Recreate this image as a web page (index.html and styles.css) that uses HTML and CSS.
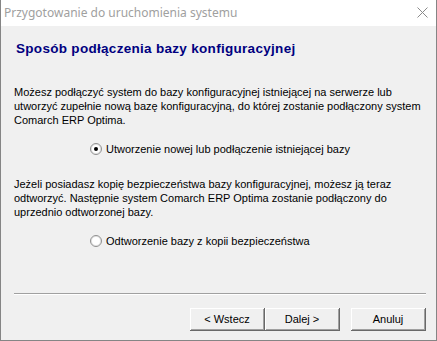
FILE: index.html
```html
<!DOCTYPE html>
<html lang="pl">
<head>
    <meta charset="UTF-8">
    <title>Przygotowanie do uruchomienia systemu</title>
    <link rel="stylesheet" href="styles.css">
</head>
<body>
    <div class="window">
        <div class="titlebar">
            <span class="title">Przygotowanie do uruchomienia systemu</span>
            <svg class="close" width="11" height="11" viewBox="0 0 11 11">
                <path d="M0.5 0.5 L10.5 10.5 M10.5 0.5 L0.5 10.5" stroke="#8a8a8a" stroke-width="1" fill="none"/>
            </svg>
        </div>
        <div class="content">
            <h1 class="heading">Sposób podłączenia bazy konfiguracyjnej</h1>
            <p class="text first">Możesz podłączyć system do bazy konfiguracyjnej istniejącej na serwerze lub utworzyć zupełnie nową bazę konfiguracyjną, do której zostanie podłączony system Comarch ERP Optima.</p>
            <label class="radio">
                <span class="dot checked"></span>
                <span>Utworzenie nowej lub podłączenie istniejącej bazy</span>
            </label>
            <p class="text second">Jeżeli posiadasz kopię bezpieczeństwa bazy konfiguracyjnej, możesz ją teraz odtworzyć. Następnie system Comarch ERP Optima zostanie podłączony do uprzednio odtworzonej bazy.</p>
            <label class="radio">
                <span class="dot"></span>
                <span>Odtworzenie bazy z kopii bezpieczeństwa</span>
            </label>
            <div class="spacer"></div>
            <hr class="sep">
            <div class="buttons">
                <button class="btn">&lt; Wstecz</button>
                <button class="btn">Dalej &gt;</button>
                <button class="btn cancel">Anuluj</button>
            </div>
        </div>
    </div>
</body>
</html>
```

FILE: styles.css
```css
html, body {
    margin: 0;
    padding: 0;
}
body {
    width: 437px;
    height: 341px;
    overflow: hidden;
    font-family: "Liberation Sans", Arial, sans-serif;
}
.window {
    box-sizing: border-box;
    width: 437px;
    height: 341px;
    display: flex;
    flex-direction: column;
    border: 1px solid #858585;
    border-top: none;
    background: #f0f0f0;
}
.titlebar {
    height: 26px;
    background: #fff;
    display: flex;
    align-items: center;
    justify-content: space-between;
    padding: 0 8px 0 3px;
    flex-shrink: 0;
}
.title {
    font-family: "Noto Sans", sans-serif;
    font-size: 12px;
    color: #a0a0a0;
    position: relative;
    top: -1px;
}
.close {
    position: relative;
    top: -1px;
}
.content {
    flex: 1;
    display: flex;
    flex-direction: column;
    padding: 0 10px 9px 13px;
}
.heading {
    margin: 15px 0 0 2px;
    font-size: 13.5px;
    font-weight: bold;
    color: #000080;
    letter-spacing: 0.3px;
}
.text {
    width: 410px;
    margin: 0;
    font-size: 11px;
    line-height: 14px;
    color: #000;
}
.first {
    margin-top: 29px;
}
.second {
    margin-top: 21px;
}
.radio {
    display: flex;
    align-items: center;
    gap: 4px;
    height: 14px;
    margin: 15px 0 0 76px;
    font-size: 11px;
    color: #000;
}
.dot {
    box-sizing: border-box;
    width: 12px;
    height: 12px;
    border-radius: 50%;
    border: 1px solid #8f8f8f;
    background: #fff;
    box-shadow: inset 0 0 0 1px #e3e3e3;
    position: relative;
}
.dot.checked::after {
    content: "";
    position: absolute;
    left: 3px;
    top: 3px;
    width: 4px;
    height: 4px;
    border-radius: 50%;
    background: #000;
}
.spacer {
    flex: 1;
}
.sep {
    margin: 0 0 13px 0;
    border: none;
    border-top: 1px solid #a0a0a0;
    border-bottom: 1px solid #fff;
    height: 0;
}
.buttons {
    display: flex;
    justify-content: flex-end;
}
.btn {
    box-sizing: border-box;
    width: 75px;
    height: 23px;
    font-family: "Liberation Sans", Arial, sans-serif;
    font-size: 11px;
    color: #000;
    background: #f0f0f0;
    border: none;
    border-right: 1px solid #696969;
    border-bottom: 1px solid #696969;
    box-shadow: inset 1px 1px 0 #fff, inset -1px -1px 0 #a0a0a0;
    padding: 0;
}
.cancel {
    margin-left: 11px;
}
```
